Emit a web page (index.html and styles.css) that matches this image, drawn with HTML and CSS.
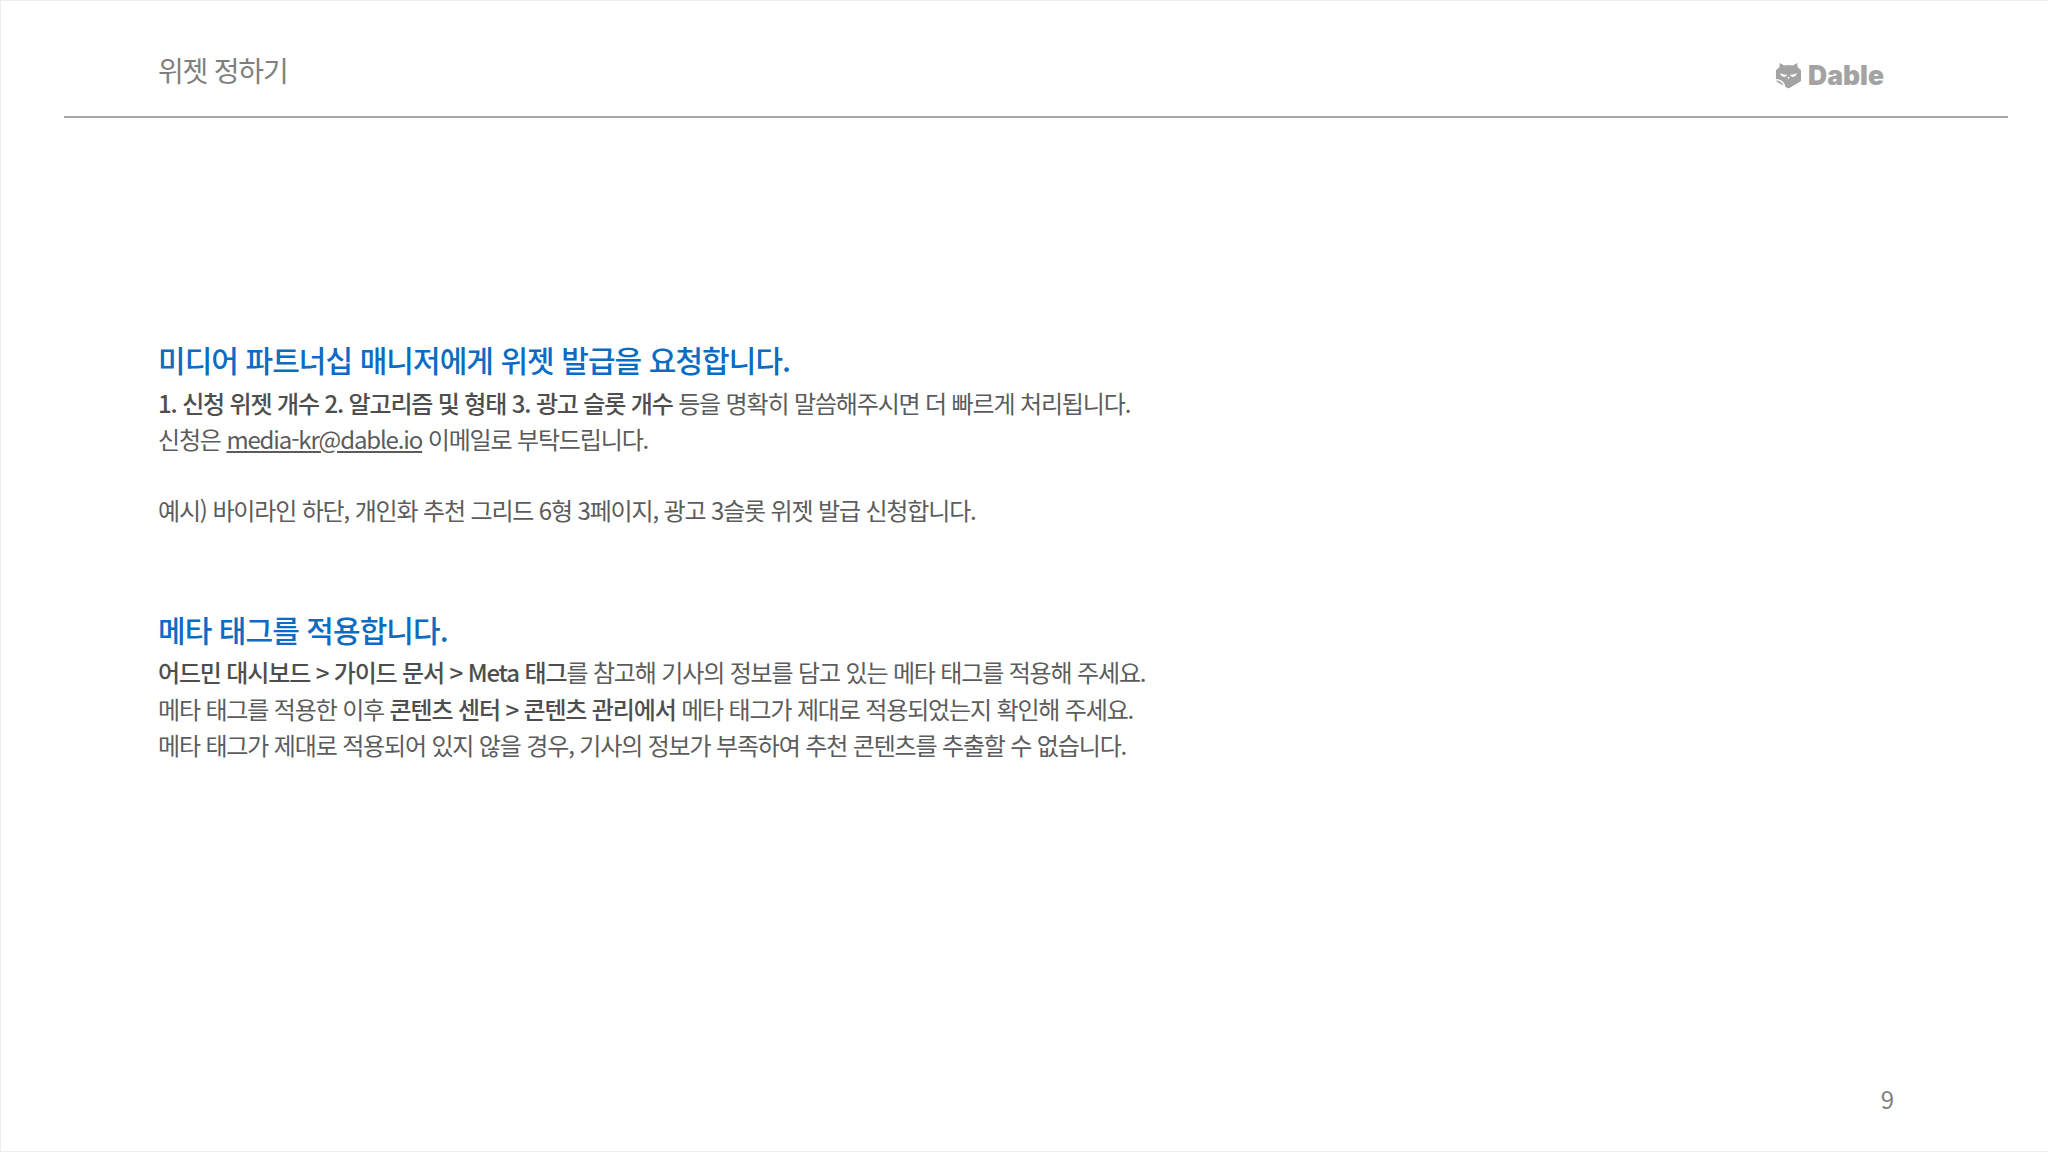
FILE: index.html
```
<!DOCTYPE html>
<html lang="ko">
<head>
<meta charset="utf-8">
<title>위젯 정하기</title>
<link rel="stylesheet" href="styles.css">
</head>
<body>
<div class="slide">
  <header class="top">
    <h1 class="page-title">위젯 정하기</h1>
    <div class="logo">
      <svg class="logo-mark" viewBox="0 0 28 28" width="27" height="27" aria-hidden="true">
        <path class="mark-fill" d="M5 1 L9.5 3.5 Q14 2.6 18.5 3.5 L23 1 L23.5 5.5 L26 7.5 Q27 8.3 27 9.5 V19 Q27 20 26 20.6 L15 27 Q14 27.6 13 27 L2 20.6 Q1 20 1 19 V9.5 Q1 8.3 2 7.5 L4.5 5.5 Z"/>
        <path class="mark-cut" d="M5.5 11.5 Q6 15.5 9.5 15.5 Q12 15.5 12.5 13 Q8.5 13.5 5.5 11.5 Z M22.5 11.5 Q22 15.5 18.5 15.5 Q16 15.5 15.5 13 Q19.5 13.5 22.5 11.5 Z"/>
        <path class="mark-cut" d="M12.8 15.5 H15.2 L14 18 Z"/>
        <path class="mark-line" d="M1 18.5 Q8 18.5 10 25.5"/>
      </svg>
      <span class="logo-text">Dable</span>
    </div>
  </header>
  <main class="content">
    <section class="block">
      <h2 class="heading">미디어 파트너십 매니저에게 위젯 발급을 요청합니다.</h2>
      <p class="line"><b>1. 신청 위젯 개수 2. 알고리즘 및 형태 3. 광고 슬롯 개수</b> 등을 명확히 말씀해주시면 더 빠르게 처리됩니다.</p>
      <p class="line">신청은 <a class="mail" href="#">media-kr@dable.io</a> 이메일로 부탁드립니다.</p>
      <p class="line gap">예시) 바이라인 하단, 개인화 추천 그리드 6형 3페이지, 광고 3슬롯 위젯 발급 신청합니다.</p>
    </section>
    <section class="block">
      <h2 class="heading">메타 태그를 적용합니다.</h2>
      <p class="line"><b>어드민 대시보드 &gt; 가이드 문서 &gt; Meta 태그</b>를 참고해 기사의 정보를 담고 있는 메타 태그를 적용해 주세요.</p>
      <p class="line">메타 태그를 적용한 이후 <b>콘텐츠 센터 &gt; 콘텐츠 관리에서</b> 메타 태그가 제대로 적용되었는지 확인해 주세요.</p>
      <p class="line">메타 태그가 제대로 적용되어 있지 않을 경우, 기사의 정보가 부족하여 추천 콘텐츠를 추출할 수 없습니다.</p>
    </section>
  </main>
  <footer class="foot"><span class="page-no">9</span></footer>
</div>
</body>
</html>
```

FILE: styles.css
```
* { box-sizing: border-box; }
html, body { margin: 0; padding: 0; background: #fff; }
body { font-family: "Noto Sans CJK KR", "Noto Sans", sans-serif; }
.slide {
  width: 2048px;
  height: 1152px;
  border: 1px solid #ededed;
  border-width: 1px 0 1px 1px;
  display: flex;
  flex-direction: column;
}
.top {
  margin: 0 40px 0 63px;
  height: 117px;
  border-bottom: 2px solid #a6a6a6;
  padding: 0 124px 0 94px;
  display: flex;
  justify-content: space-between;
  align-items: flex-start;
}
.page-title {
  margin: 49px 0 0;
  font-size: 28px;
  line-height: 40px;
  font-weight: 400;
  letter-spacing: -1.2px;
  color: #7f7f7f;
}
.logo {
  margin-top: 59px;
  display: flex;
  align-items: center;
  gap: 6px;
}
.logo-mark { display: block; }
.mark-fill { fill: #a3a3a3; }
.mark-cut { fill: #fff; }
.mark-line { fill: none; stroke: #fff; stroke-width: 1.6; }
.logo-text {
  font-family: Inter, "Liberation Sans", sans-serif;
  font-weight: 900;
  font-size: 26.5px;
  line-height: 30px;
  color: #a3a3a3;
}
.content {
  padding: 221px 0 0 157px;
  flex: 1;
}
.block + .block { margin-top: 80px; }
.heading {
  margin: 0 0 5.5px;
  font-size: 30px;
  line-height: 40px;
  font-weight: 500;
  letter-spacing: -0.93px;
  color: #0b6cc4;
}
.line {
  margin: 0;
  font-size: 24px;
  line-height: 36.5px;
  letter-spacing: -1.15px;
  color: #5c5c5c;
  white-space: nowrap;
}
.line b { font-weight: 500; color: #4e4e4e; }
.gap { margin-top: 34.5px; }
.mail { color: inherit; text-decoration: underline; }
.foot {
  padding: 0 154px 36px 0;
  display: flex;
  justify-content: flex-end;
}
.page-no {
  font-size: 24px;
  line-height: 32px;
  color: #7f7f7f;
}
```
